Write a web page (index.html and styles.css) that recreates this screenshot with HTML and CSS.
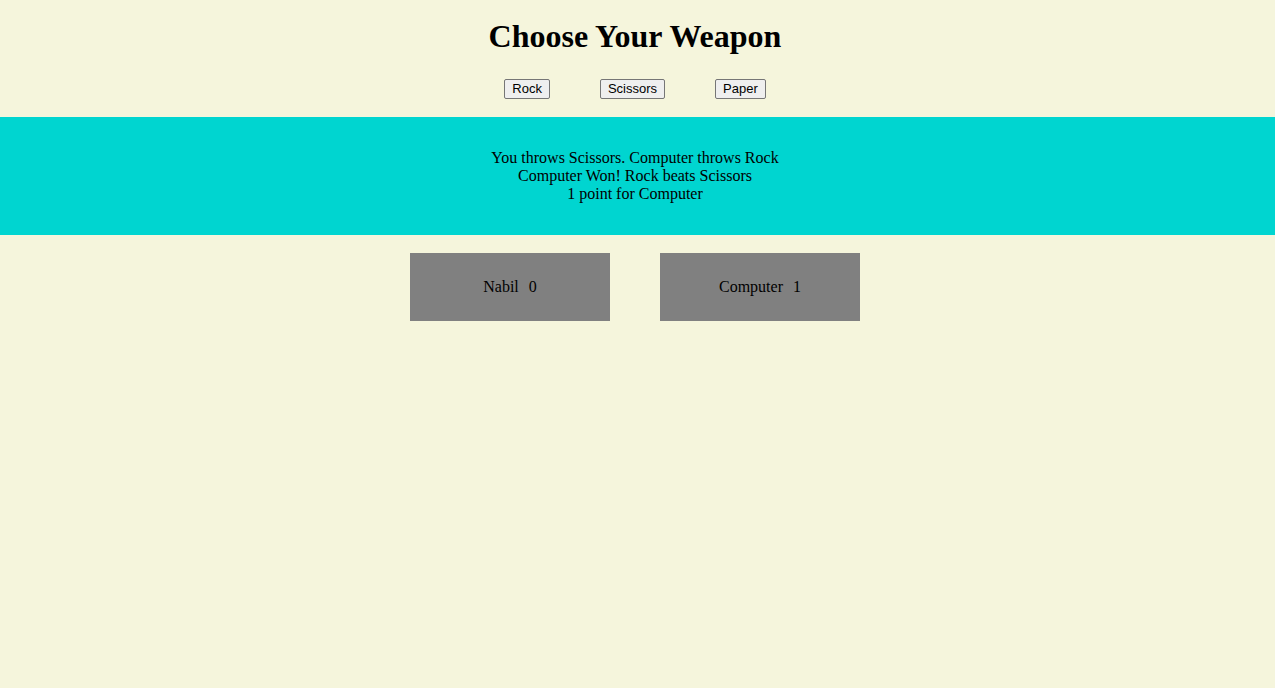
FILE: index.html
```html
<!DOCTYPE html>
<html>
<head>
<meta charset="utf-8">
<title>Rock Paper Scissors</title>
<link rel="stylesheet" href="styles.css">
</head>
<body>
<header class="top">
  <h1 class="title">Choose Your Weapon</h1>
  <div class="choices">
    <button class="choice">Rock</button>
    <button class="choice">Scissors</button>
    <button class="choice">Paper</button>
  </div>
</header>
<section class="result">
  <div>You throws Scissors. Computer throws Rock</div>
  <div>Computer Won! Rock beats Scissors</div>
  <div>1 point for Computer</div>
</section>
<section class="scores">
  <div class="score"><span class="name">Nabil</span><span class="pts">0</span></div>
  <div class="score"><span class="name">Computer</span><span class="pts">1</span></div>
</section>
</body>
</html>
```

FILE: styles.css
```css
html, body {
  margin: 0;
  padding: 0;
  background: #f5f5dc;
  font-family: "Liberation Serif", "Times New Roman", serif;
  font-size: 16px;
  color: #000;
}
.top {
  text-align: center;
  padding: 18px 5px 18px 0;
}
.title {
  font-size: 32px;
  font-weight: bold;
  margin: 0 0 24px;
  line-height: 37px;
}
.choices {
  display: flex;
  justify-content: center;
  gap: 50px;
}
.choice {
  font-family: "Liberation Sans", Arial, sans-serif;
  font-size: 13px;
  padding: 1px 7px;
  height: 20px;
  line-height: 16px;
  background: #efefef;
  border: 1px solid #767676;
  border-radius: 2px;
  color: #000;
}
.result {
  background: #00d5d0;
  text-align: center;
  padding: 32px 5px 32px 0;
  line-height: 18px;
}
.scores {
  display: flex;
  justify-content: center;
  gap: 50px;
  margin-top: 18px;
  padding-right: 5px;
}
.score {
  width: 200px;
  height: 68px;
  background: #808080;
  display: flex;
  align-items: center;
  justify-content: center;
  gap: 10px;
}
```
